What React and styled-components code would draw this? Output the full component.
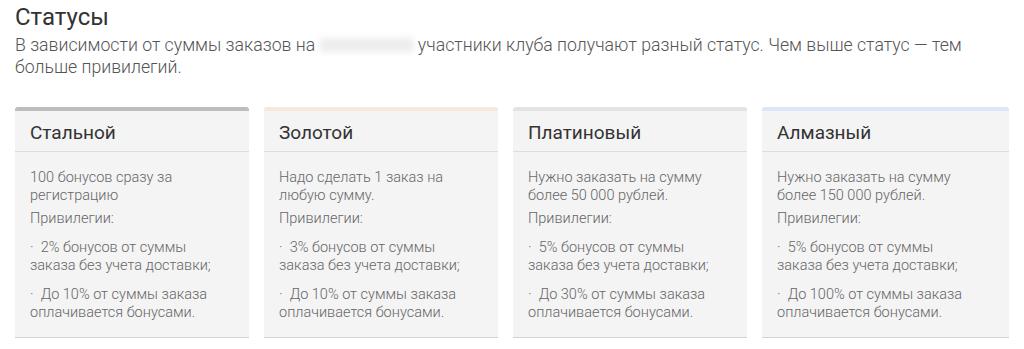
import React from 'react';
import styled, { createGlobalStyle } from 'styled-components';

const STATUSES = [
  {
    title: 'Стальной',
    accent: '#bdbdbd',
    condition: '100 бонусов сразу за регистрацию',
    perks: ['2% бонусов от суммы заказа без учета доставки;', 'До 10% от суммы заказа оплачивается бонусами.'],
  },
  {
    title: 'Золотой',
    accent: '#f8e7dc',
    condition: 'Надо сделать 1 заказ на любую сумму.',
    perks: ['3% бонусов от суммы заказа без учета доставки;', 'До 10% от суммы заказа оплачивается бонусами.'],
  },
  {
    title: 'Платиновый',
    accent: '#e3e3e3',
    condition: 'Нужно заказать на сумму более 50 000 рублей.',
    perks: ['5% бонусов от суммы заказа без учета доставки;', 'До 30% от суммы заказа оплачивается бонусами.'],
  },
  {
    title: 'Алмазный',
    accent: '#dde5f8',
    condition: 'Нужно заказать на сумму более 150 000 рублей.',
    perks: ['5% бонусов от суммы заказа без учета доставки;', 'До 100% от суммы заказа оплачивается бонусами.'],
  },
];

const GlobalStyle = createGlobalStyle`
  body {
    margin: 0;
    background: #fff;
    font-family: Roboto, 'Liberation Sans', sans-serif;
  }
`;

const App = () => {
  return (
    <Page>
      <GlobalStyle />
      <Heading>Статусы</Heading>
      <Intro>
        В зависимости от суммы заказов на <Hidden aria-hidden="true" /> участники клуба получают
        разный статус. Чем выше статус — тем больше привилегий.
      </Intro>
      <Cards>
        {STATUSES.map(status => {
          return (
            <Card key={status.title} accent={status.accent}>
              <CardHead>{status.title}</CardHead>
              <CardBody>
                <Text>{status.condition}</Text>
                <Text>Привилегии:</Text>
                {status.perks.map(perk => {
                  return <Perk key={perk}>{'·\u00a0\u00a0' + perk}</Perk>;
                })}
              </CardBody>
            </Card>
          );
        })}
      </Cards>
    </Page>
  );
};

const Page = styled.section`
  padding: 2px 16px 10px 15px;
`;

const Heading = styled.h2`
  margin: 0;
  font-size: 24px;
  line-height: 30px;
  font-weight: 400;
  color: #333;
`;

const Intro = styled.p`
  margin: 2px 0 0;
  font-size: 17.7px;
  line-height: 22px;
  font-weight: 300;
  color: #555;
`;

// blurred-out shop name
const Hidden = styled.span`
  display: inline-block;
  width: 94px;
  height: 14px;
  background: #ededed;
  filter: blur(3px);
  vertical-align: -1px;
`;

const Cards = styled.div`
  display: grid;
  grid-template-columns: 234px 234px 234px 247px;
  column-gap: 15px;
  margin-top: 29px;
`;

const Card = styled.div`
  background: #f4f4f4;
  border-top: 4px solid ${props => props.accent};
  border-radius: 3px 3px 0 0;
  box-shadow: 0 1px 0 #d4d4d4;
`;

const CardHead = styled.div`
  height: 41px;
  padding: 2px 15px 0;
  box-sizing: border-box;
  display: flex;
  align-items: center;
  border-bottom: 1px solid #dddddd;
  font-size: 19px;
  font-weight: 400;
  color: #333;
`;

const CardBody = styled.div`
  padding: 17px 15px 15px;
  display: flex;
  flex-direction: column;
  gap: 5px;
`;

const Text = styled.p`
  margin: 0;
  max-width: 200px;
  font-size: 14.5px;
  line-height: 18px;
  font-weight: 300;
  color: #666;
`;

const Perk = styled(Text)`
  margin-top: 6px;
`;

export default App;
